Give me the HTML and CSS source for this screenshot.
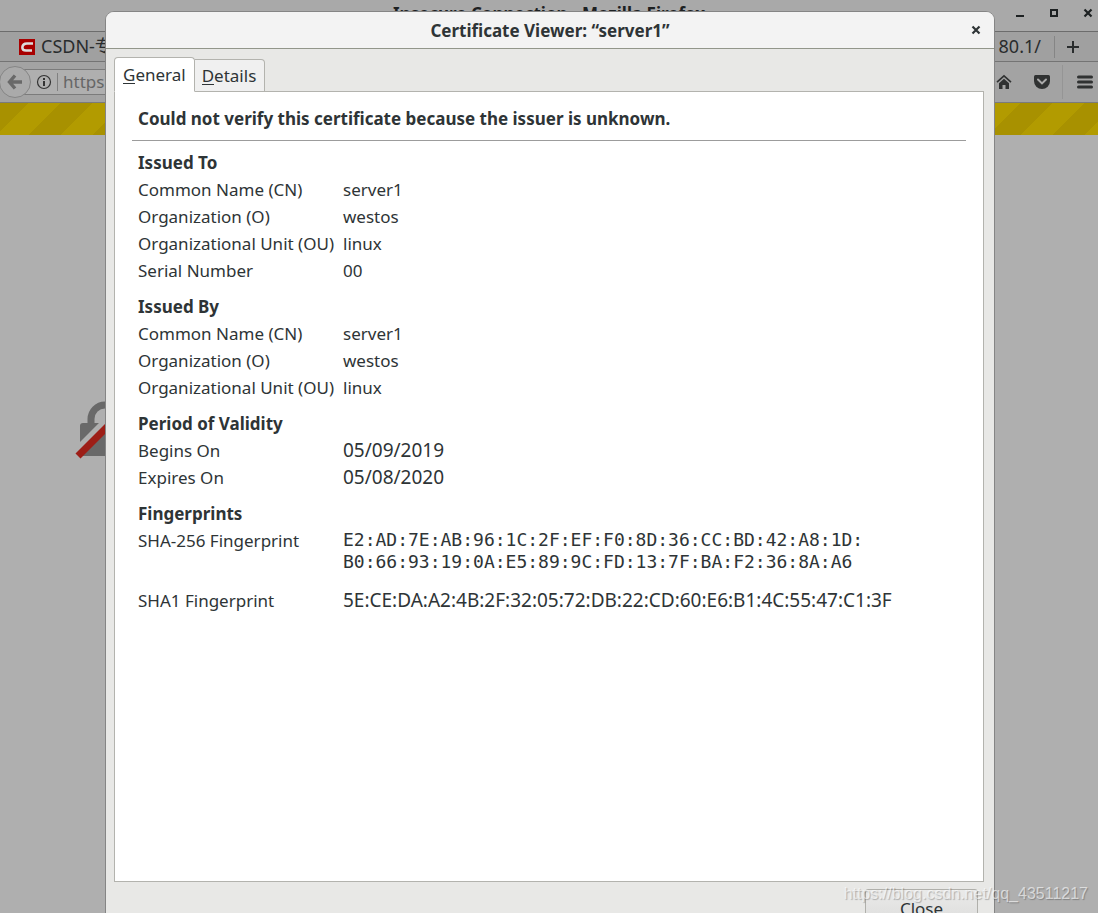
FILE: index.html
```
<!DOCTYPE html>
<html lang="en">
<head>
<meta charset="utf-8">
<title>Certificate Viewer</title>
<link rel="stylesheet" href="styles.css">
</head>
<body>
<div class="browser">
  <header class="titlebar">
    <span class="titlebar-text">Insecure Connection - Mozilla Firefox</span>
    <div class="window-buttons">
      <button type="button" aria-label="Minimize"><svg width="10" height="10" viewBox="0 0 10 10"><path d="M1 8h8" stroke="#1d2122" stroke-width="2"/></svg></button>
      <button type="button" aria-label="Maximize"><svg width="10" height="10" viewBox="0 0 10 10"><path d="M2 2h6v6H2z" fill="none" stroke="#1d2122" stroke-width="2"/></svg></button>
      <button type="button" aria-label="Close window"><svg width="10" height="10" viewBox="0 0 10 10"><path d="M1.500 1.500l7 7M8.500 1.500l-7 7" stroke="#1d2122" stroke-width="2.200"/></svg></button>
    </div>
  </header>
  <div class="tabstrip">
    <div class="page-tab">
      <svg width="16" height="16" viewBox="0 0 16 16"><path d="M0 0h16v16H0z" fill="#a80000"/><path d="M14 4.500H8C5 4.500 3.600 6 3.400 8.200c-.2 2.200 1 3.300 3.600 3.300h6" fill="none" stroke="#ddd" stroke-width="2.600"/></svg>
      <span>CSDN-专</span>
    </div>
    <div class="page-tab page-tab-last"><span>80.1/</span></div>
    <button class="new-tab" type="button" aria-label="New tab"><svg width="14" height="14" viewBox="0 0 14 14"><path d="M7 1v12M1 7h12" stroke="#292c2d" stroke-width="2"/></svg></button>
  </div>
  <div class="navbar">
    <button class="back" type="button" aria-label="Back"><svg width="16" height="16" viewBox="0 0 16 16"><path d="M8 1.500L2.500 8l5.500 6.500M3 8h12" fill="none" stroke="#696969" stroke-width="3.400"/></svg></button>
    <div class="urlbar">
      <svg width="16" height="16" viewBox="0 0 16 16"><circle cx="8" cy="8" r="6.500" fill="none" stroke="#333" stroke-width="1.200"/><path d="M8 4v2M8 7v5" stroke="#333" stroke-width="2"/></svg>
      <input class="url" aria-label="Address" value="https" readonly>
    </div>
    <div class="nav-icons">
      <button type="button" aria-label="Home"><svg width="16" height="16" viewBox="0 0 16 16"><path d="M1 8.200L8 1.800l7 6.400" fill="none" stroke="#303232" stroke-width="1.600"/><path d="M3 9.300L8 4.800l5 4.500V15H9.500v-4h-3v4H3z" fill="#303232"/></svg></button>
      <button type="button" aria-label="Pocket"><svg width="16" height="16" viewBox="0 0 16 16"><path d="M1.500 1h13q1.500 0 1.500 1.500V7a8 8 0 0 1-16 0V2.500Q0 1 1.500 1z" fill="#303232"/><path d="M4 5.500L8 9.400l4-3.900" fill="none" stroke="#aaa" stroke-width="2" stroke-linecap="round"/></svg></button>
      <button class="menu" type="button" aria-label="Menu"><svg width="16" height="14" viewBox="0 0 16 14"><path d="M1.500 2h13M1.500 7h13M1.500 12h13" stroke="#303232" stroke-width="3" stroke-linecap="round"/></svg></button>
    </div>
  </div>
  <div class="stripes"></div>
  <main class="page">
    <svg width="64" height="60" viewBox="0 0 64 60"><path d="M16 24v-6a14 14 0 0 1 28 0v6" fill="none" stroke="#696969" stroke-width="7"/><rect x="5" y="22" width="50" height="33" rx="3" fill="#696969"/><path d="M0 53L50 3" stroke="#afafaf" stroke-width="10"/><path d="M3 55L53 5" stroke="#9d1e17" stroke-width="7"/></svg>
  </main>
</div>

<section class="dialog" role="dialog" aria-labelledby="dialog-title">
  <header class="dialog-header">
    <h1 id="dialog-title">Certificate Viewer: “server1”</h1>
    <button type="button" aria-label="Close dialog"><svg width="10" height="10" viewBox="0 0 10 10"><path d="M1.500 1.500l7 7M8.500 1.500l-7 7" stroke="#2e3436" stroke-width="2.200"/></svg></button>
  </header>
  <div class="dialog-body">
    <div class="tabs" role="tablist">
      <button class="tab tab-active" type="button" role="tab" aria-selected="true"><span class="key">G</span>eneral</button>
      <button class="tab" type="button" role="tab" aria-selected="false"><span class="key">D</span>etails</button>
    </div>
    <div class="panel" role="tabpanel">
      <h2 class="verdict">Could not verify this certificate because the issuer is unknown.</h2>
      <table class="details">
        <colgroup><col class="label-col"><col></colgroup>
        <tbody>
          <tr><th class="group" colspan="2">Issued To</th></tr>
          <tr><th>Common Name (CN)</th><td>server1</td></tr>
          <tr><th>Organization (O)</th><td>westos</td></tr>
          <tr><th>Organizational Unit (OU)</th><td>linux</td></tr>
          <tr><th>Serial Number</th><td>00</td></tr>
        </tbody>
        <tbody>
          <tr><th class="group" colspan="2">Issued By</th></tr>
          <tr><th>Common Name (CN)</th><td>server1</td></tr>
          <tr><th>Organization (O)</th><td>westos</td></tr>
          <tr><th>Organizational Unit (OU)</th><td>linux</td></tr>
        </tbody>
        <tbody>
          <tr><th class="group" colspan="2">Period of Validity</th></tr>
          <tr><th>Begins On</th><td class="figures">05/09/2019</td></tr>
          <tr><th>Expires On</th><td class="figures">05/08/2020</td></tr>
        </tbody>
        <tbody>
          <tr><th class="group" colspan="2">Fingerprints</th></tr>
          <tr class="tall"><th>SHA-256 Fingerprint</th><td class="mono">E2:AD:7E:AB:96:1C:2F:EF:F0:8D:36:CC:BD:42:A8:1D:<br>B0:66:93:19:0A:E5:89:9C:FD:13:7F:BA:F2:36:8A:A6</td></tr>
          <tr><th>SHA1 Fingerprint</th><td class="figures">5E:CE:DA:A2:4B:2F:32:05:72:DB:22:CD:60:E6:B1:4C:55:47:C1:3F</td></tr>
        </tbody>
      </table>
    </div>
    <footer class="actions"><button class="close" type="button">Close</button></footer>
  </div>
</section>
<div class="watermark">https://blog.csdn.net/qq_43511217</div>
</body>
</html>
```
FILE: styles.css
```
* { box-sizing: border-box; }

body {
  margin: 0;
  height: 100vh;
  overflow: hidden;
  position: relative;
  background: #afafaf;
  color: #2e3436;
  font: 17px/27px "Noto Sans", "Noto Sans CJK SC", sans-serif;
}

button {
  font: inherit;
  color: inherit;
  border: 0;
  padding: 0;
  background: none;
}

svg { display: block; flex: none; }

/* Browser window */
.browser { display: flex; flex-direction: column; height: 100%; }

.titlebar {
  display: grid;
  grid-template-columns: 1fr auto 1fr;
  height: 32px;
  background: #a9a9a9;
  border-bottom: 1px solid #6c6c6c;
  color: #1d2122;
  font-weight: 700;
}
.titlebar-text { grid-column: 2; }
.window-buttons {
  display: flex;
  justify-content: flex-end;
  align-items: center;
  gap: 24px;
  padding: 0 5px 6px 0;
}

.tabstrip {
  display: flex;
  align-items: center;
  height: 30px;
  background: #a0a0a0;
  border-bottom: 1px solid #747474;
  color: #292c2d;
  font-size: 18px;
}
.page-tab { display: flex; align-items: center; gap: 6px; padding-left: 19px; }
.page-tab-last {
  margin-left: auto;
  height: 22px;
  padding-right: 13px;
  border-right: 1px solid #858585;
}
.new-tab { padding: 0 18px 0 11px; }

.navbar {
  display: flex;
  align-items: center;
  height: 41px;
  background: #a3a3a3;
  border-bottom: 1px solid #7b7b7b;
}
.back {
  display: grid;
  place-items: center;
  width: 32px;
  height: 32px;
  margin-left: -1px;
  border: 1px solid #858585;
  border-radius: 50%;
  background: #aaa;
  z-index: 1;
}
.urlbar {
  display: flex;
  align-items: center;
  gap: 5px;
  flex: 1;
  height: 26px;
  margin: 0 12px 0 -8px;
  padding-left: 12px;
  border: 1px solid #7b7b7b;
  background: #afafaf;
}
.url {
  flex: 1;
  height: 18px;
  padding: 0 0 0 5px;
  border: 0;
  border-left: 1px solid #808080;
  background: none;
  color: #666;
  font: inherit;
  line-height: 18px;
}
.nav-icons { display: flex; align-items: center; gap: 22px; padding-right: 5px; }
.menu {
  display: flex;
  align-items: center;
  height: 34px;
  margin-left: -10px;
  padding-left: 14px;
  border-left: 1px solid #959595;
}

.stripes {
  height: 32px;
  background: linear-gradient(135deg, #a89100 25%, #b29b00 25% 50%, #a89100 50% 75%, #b29b00 75%) 60px 0 / 64px 64px;
}
.page { padding: 266px 0 0 75px; }

/* Certificate dialog */
.dialog {
  position: absolute;
  inset: 11px 103px -23px 105px;
  display: flex;
  flex-direction: column;
  border: 1px solid #858585;
  border-radius: 9px 9px 0 0;
  background: #e8e8e6;
}
.dialog-header {
  display: grid;
  grid-template-columns: 1fr auto 1fr;
  align-items: center;
  height: 37px;
  border-bottom: 1px solid #92968a;
  border-radius: 8px 8px 0 0;
  background: #f3f3f3;
}
.dialog-header h1 { grid-column: 2; margin: 0; font-size: 17px; font-weight: 700; }
.dialog-header button { justify-self: end; padding-right: 13px; }

.dialog-body {
  display: flex;
  flex-direction: column;
  flex: 1;
  padding: 8px 10px 8px 8px;
}
.tabs { display: flex; align-items: flex-end; height: 35px; z-index: 1; }
.tab {
  height: 33px;
  padding: 0 8px 0 7px;
  border: 1px solid #b3b3ae;
  border-left: 0;
  border-radius: 0 4px 0 0;
  background: #f0f0f0;
}
.tab-active {
  height: 35px;
  padding-left: 8px;
  border-left: 1px solid #b3b3ae;
  border-bottom-color: #fff;
  border-radius: 4px 4px 0 0;
  background: #fff;
}
.key { border-bottom: 1px solid #2e3436; line-height: 1; display: inline-block; }

.panel {
  flex: 1;
  margin-top: -1px;
  padding: 13px 17px;
  border: 1px solid #b3b3ae;
  background: #fff;
}
.verdict {
  margin: 0 0 8px;
  padding: 0 6px 8px;
  border-bottom: 1px solid #9c9c9c;
  font-size: 17px;
  font-weight: 700;
}
.details { width: 100%; border-collapse: collapse; table-layout: fixed; }
.label-col { width: 211px; }
.details tbody + tbody::before { content: ""; display: block; height: 9px; }
.details th, .details td {
  height: 27px;
  padding: 0;
  text-align: left;
  vertical-align: top;
  font-weight: 400;
  white-space: nowrap;
}
.details th { padding-left: 6px; }
.details .group { font-weight: 700; }
.details .tall td { height: 60px; }
.details .figures { font-size: 19px; }
.details .mono { font: 18px/22px "DejaVu Sans Mono", monospace; padding-top: 2px; }

.actions { display: flex; justify-content: flex-end; padding: 7px 6px 0; }
.close {
  width: 113px;
  height: 38px;
  border: 1px solid #b0b0ab;
  border-radius: 3px;
  background: linear-gradient(#eaeae9, #dcdcdb);
}

.watermark {
  position: absolute;
  right: 10px;
  bottom: 6px;
  color: rgba(255, 255, 255, 0.6);
  font: 16px/26px "Liberation Sans", Arial, sans-serif;
  text-shadow: 1px 1px 1px rgba(0, 0, 0, 0.25);
}
```
